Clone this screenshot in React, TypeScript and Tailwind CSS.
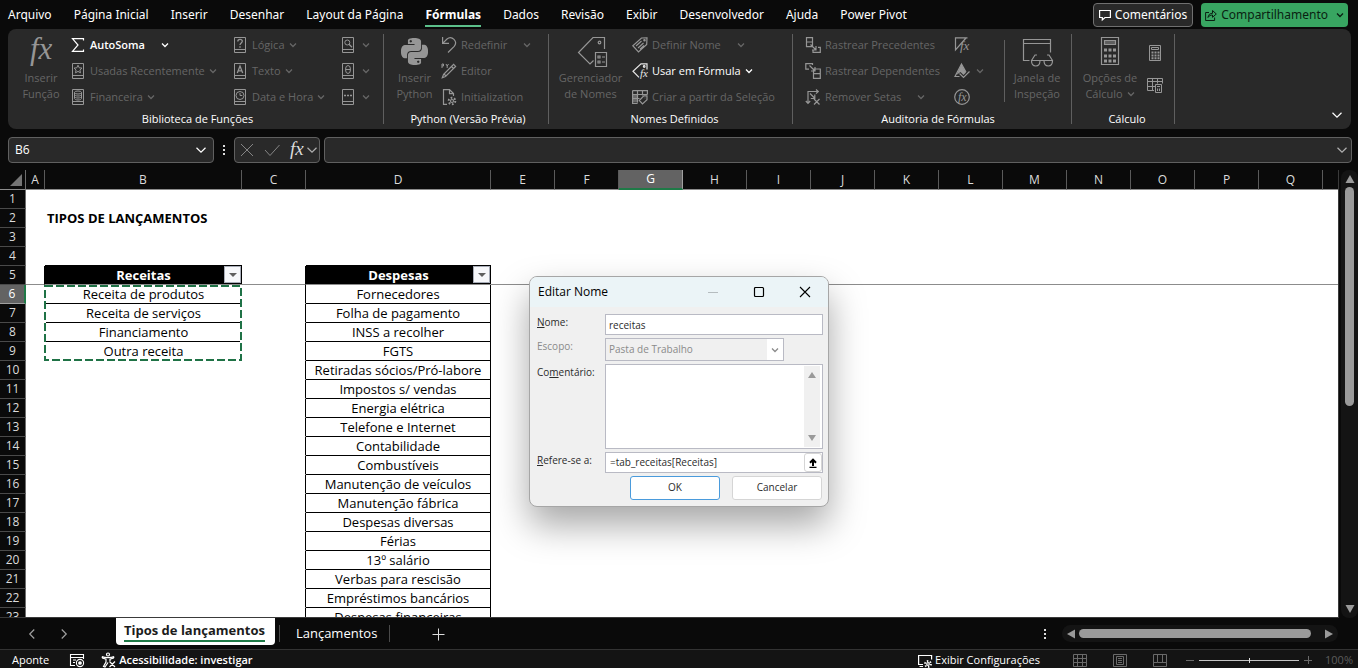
import type { ReactNode } from "react";
import { SiPython } from "react-icons/si";

const MENU = [
  "Arquivo",
  "Página Inicial",
  "Inserir",
  "Desenhar",
  "Layout da Página",
  "Fórmulas",
  "Dados",
  "Revisão",
  "Exibir",
  "Desenvolvedor",
  "Ajuda",
  "Power Pivot",
];

const COLUMNS = [
  { name: "A", width: 19 },
  { name: "B", width: 197 },
  { name: "C", width: 64 },
  { name: "D", width: 185 },
  ..."EFGHIJKLMNOPQ".split("").map((name) => ({ name, width: 64 })),
];

const RECEITAS = ["Receita de produtos", "Receita de serviços", "Financiamento", "Outra receita"];

const DESPESAS = [
  "Fornecedores",
  "Folha de pagamento",
  "INSS a recolher",
  "FGTS",
  "Retiradas sócios/Pró-labore",
  "Impostos s/ vendas",
  "Energia elétrica",
  "Telefone e Internet",
  "Contabilidade",
  "Combustíveis",
  "Manutenção de veículos",
  "Manutenção fábrica",
  "Despesas diversas",
  "Férias",
  "13º salário",
  "Verbas para rescisão",
  "Empréstimos bancários",
  "Despesas financeiras",
];

/* ── Icons ── */
function Icon({
  size = 16,
  className = "",
  width = 1.2,
  children,
}: {
  size?: number;
  className?: string;
  width?: number;
  children: ReactNode;
}) {
  return (
    <svg
      width={size}
      height={size}
      viewBox={`0 0 ${size} ${size}`}
      fill="none"
      stroke="currentColor"
      strokeWidth={width}
      className={`shrink-0 overflow-visible ${className}`}
      aria-hidden="true"
    >
      {children}
    </svg>
  );
}

function Chevron({ size = 8, className = "" }: { size?: number; className?: string }) {
  return (
    <svg
      width={size}
      height={size}
      viewBox="0 0 8 8"
      fill="none"
      stroke="currentColor"
      strokeWidth={size > 8 ? 0.8 : 1.3}
      className={`shrink-0 ${className}`}
      aria-hidden="true"
    >
      <path d="M1 2.500 4 5.500 7 2.500" />
    </svg>
  );
}

function Fx({ x, y, size }: { x: number; y: number; size: number }) {
  return (
    <text
      x={x}
      y={y}
      fontSize={size}
      fontStyle="italic"
      fontFamily="Liberation Serif, serif"
      fill="currentColor"
      stroke="none"
    >
      fx
    </text>
  );
}

// Closed book, with the function category drawn on its cover
function Book({ children }: { children: ReactNode }) {
  return (
    <Icon width={1}>
      <path d="M2.500.5h11v15h-11zM2.500 12.500h11" />
      {children}
    </Icon>
  );
}

const bookStar = (
  <Book>
    <path d="m8 2.200 1.200 2.600 2.800.3-2.100 1.900.6 2.800L8 8.400 5.500 9.800l.6-2.800L4 5.100l2.800-.3z" />
  </Book>
);
const bookCoins = (
  <Book>
    <ellipse cx="8" cy="3.500" rx="3.500" ry="1.500" />
    <path d="M4.500 3.500v6c0 .8 1.500 1.500 3.500 1.500s3.500-.7 3.500-1.500v-6M4.500 5.500C4.500 6.300 6 7 8 7s3.500-.7 3.500-1.500M4.500 7.500C4.500 8.300 6 9 8 9s3.500-.7 3.500-1.500" />
  </Book>
);
const bookQuestion = (
  <Book>
    <path strokeWidth="1.300" d="M5.800 4.500C5.800 3 6.800 2.300 8 2.300s2.300.8 2.300 2C10.300 6 8 6 8 8M8 9.300v1.400" />
  </Book>
);
const bookLetter = (
  <Book>
    <path strokeWidth="1.300" d="M5.300 10 8 3l2.700 7M6.300 7.800h3.400" />
  </Book>
);
const bookClock = (
  <Book>
    <circle cx="8" cy="6.500" r="4" />
    <path d="M8 4v2.500h2.300" />
  </Book>
);
const bookSearch = (
  <Book>
    <circle cx="7.300" cy="5.500" r="2.500" />
    <path strokeWidth="1.300" d="m9 7.300 3 3" />
  </Book>
);
const bookTheta = (
  <Book>
    <ellipse cx="8" cy="6.500" rx="2.500" ry="4" />
    <path d="M5.500 6.500h5" />
  </Book>
);
const bookDots = (
  <Book>
    <path strokeWidth="1.500" d="M4 6.500h2M7 6.500h2M10 6.500h2" />
  </Book>
);
const sigma = (
  <Icon>
    <path d="M13.500 3.500V1.600H2.500L8 8l-5.500 6.400h11v-2" />
  </Icon>
);
const undo = (
  <Icon>
    <path d="M1.600 0v6.400H8M1.900 6.100 6 2c2.200-1.800 5-1.600 7 .4 2 2.100 2 4.800.2 7L7 15.500" />
  </Icon>
);
const pyEditor = (
  <Icon>
    <path strokeWidth="1" d="M1 5V1h1.500v2H1M5 1l1.200 2L7.500 1M6.200 3v2" />
    <path d="M2.500 11.500 12.600 1.400l2 2L4.500 13.500l-3.200 1.200zM10.500 3.500l2 2M3 11l2 2" />
  </Icon>
);
const pyInit = (
  <Icon>
    <path d="M6 15.400H2.500V.6h6l4 4V7M8.500.6v4h4" />
    <circle cx="11" cy="12" r="1.500" />
    <circle cx="11" cy="12" r="3.300" strokeWidth="2" strokeDasharray="1.700 1.750" />
  </Icon>
);
const tagLines = (
  <Icon>
    <path d="M15 .8 9.500 1 .8 8.700 6.500 15l8.200-7.500zM4 9l5.500-5M6 11l5.500-5M8 12.200l4-3.700" />
    <circle cx="12.500" cy="3.300" r=".7" />
  </Icon>
);
const tagFx = (
  <Icon>
    <path d="M15 6.500V.8H9L1 8.200l6 6.200" />
    <circle cx="12.200" cy="3.500" r=".8" />
    <Fx x={8} y={14} size={11} />
  </Icon>
);
const gridTag = (
  <Icon>
    <path d="M.6 1.600h14.800v4M.6 1.600v12.800h5M.6 5.500h14.800M.6 9.500h7M5.500 1.600v12M10.500 1.600v5" />
    <path d="M1 6h4v3H1zM1 10h4v3H1z" fill="currentColor" stroke="none" opacity=".6" />
    <path d="M15 6.800v4L10.500 15 7.300 11.500l4.500-4.700zM13 8.700v.6" />
  </Icon>
);
const precedents = (
  <Icon>
    <path d="M1.500.6h6v9h-6zM1.500 5h6M8 12.500v2.800h7.300v-5H13M5.500 7.500l5 5M11 9v4H7" />
  </Icon>
);
const dependents = (
  <Icon>
    <path d="M7.500 2V.6H.8v5.500H4M8.500 6h6.800v9.400H8.500zM8.500 10.600h6.800M4.500 2.500l5 5M10 4v4H6" />
  </Icon>
);
const removeArrows = (
  <Icon>
    <path d="M3 14V2.500h10M.8 12 3 14.400 5.200 12M11 .5l2.300 2L11 4.600M5 4.500l4.500 4.500M9.800 5.500v4h-4M9 10l5.500 5.500M14.500 10 9 15.500" />
  </Icon>
);
const showFormulas = (
  <Icon>
    <path d="M13.500.8H1.500v12L12 1" />
    <Fx x={6} y={13} size={13} />
  </Icon>
);
const errorCheck = (
  <Icon>
    <path d="M7.500 1 12 9.500 9.500 12 6.500 9 2.500 12z" fill="currentColor" stroke="none" />
    <path d="M5.500 13.500H1L7.500 1l4.500 8M5.500 10.500l4 4L15.500 8.500" />
  </Icon>
);
const evaluate = (
  <Icon>
    <circle cx="8" cy="8" r="7.300" />
    <Fx x={4} y={12} size={12} />
  </Icon>
);

const bigFx = (
  <Icon size={32}>
    <Fx x={5} y={24} size={31} />
  </Icon>
);
const bigTag = (
  <Icon size={32}>
    <path d="M29.500 14V2.500H18L3.500 17.500 15 29l3.500-3.500" />
    <circle cx="24.500" cy="7.500" r="1.300" />
    <path d="M20.500 17.500h11v14h-11zM23 21h2v2h-2zM23 26h2v2h-2zM27 22h3M27 27h3" />
  </Icon>
);
const bigWatch = (
  <Icon size={32}>
    <path d="M8.500 25.500H2.500v-21h27v13M2.500 8.500h27M10.500 25.500 14 20h2M31.500 25.500 28 20h-2M19 25.500h4" />
    <path d="M10.500 25.500H19c0 3.500-1.500 5.500-4.200 5.500s-4.300-2-4.300-5.500zM23 25.500h8.500c0 3.500-1.500 5.500-4.200 5.500S23 29 23 25.500z" />
  </Icon>
);
const bigCalc = (
  <Icon size={32}>
    <path d="M7.500 2.500h17v27h-17z" />
    <path d="M10.500 5.500h11v4h-11z" fill="currentColor" fillOpacity=".5" />
    <path strokeWidth="3" strokeDasharray="3 1.500" d="M10 15h12M10 21h12M10 26h12" />
  </Icon>
);
const calcNow = (
  <Icon width={1}>
    <path d="M2.500.5h11v15h-11zM4.500 2.500h7v2h-7z" />
    <path strokeWidth="2" strokeDasharray="2 1" d="M4.500 7.500h8M4.500 10.500h8M4.500 13.300h8" />
  </Icon>
);
const calcSheet = (
  <Icon width={1}>
    <path d="M7 13.500H.5v-12h15v5M.5 4.500h15M.5 9.500H8M5.500 1.500v12M10.500 1.500v5M8.500 7.500h6v8h-6zM10 9.500h3M10.500 11.500v2.500M12.500 11.500v2.500" />
  </Icon>
);

/* ── Ribbon ── */
function RibbonItem({
  icon,
  label,
  arrow = false,
  spaced = false,
  active = false,
}: {
  icon: ReactNode;
  label: string;
  arrow?: boolean;
  spaced?: boolean;
  active?: boolean;
}) {
  return (
    <button
      type="button"
      disabled={!active}
      className={`flex h-[26px] items-center whitespace-nowrap ${active ? "font-medium text-white" : "text-[#666666]"}`}
    >
      <span className={active ? "text-[#e6e6e6]" : "text-[#969696]"}>{icon}</span>
      <span className="ml-1">{label}</span>
      {arrow && <Chevron className={spaced ? "ml-4" : "ml-1"} />}
    </button>
  );
}

function IconItem({ icon, label, arrow = false }: { icon: ReactNode; label: string; arrow?: boolean }) {
  return (
    <button
      type="button"
      disabled
      aria-label={label}
      className="flex h-[26px] items-center gap-[6px] text-[#666666]"
    >
      <span className="text-[#969696]">{icon}</span>
      {arrow && <Chevron />}
    </button>
  );
}

function BigItem({ icon, lines, arrow = false }: { icon: ReactNode; lines: [string, string]; arrow?: boolean }) {
  return (
    <button
      type="button"
      disabled
      className="flex flex-col items-center pt-[3px] leading-4 whitespace-nowrap text-[#666666]"
    >
      <span className="flex h-8 items-center text-[#969696]">{icon}</span>
      <span className="mt-[3px]">{lines[0]}</span>
      <span className="flex items-center gap-1">
        {lines[1]}
        {arrow && <Chevron />}
      </span>
    </button>
  );
}

function Group({ title, className, children }: { title: string; className: string; children: ReactNode }) {
  return (
    <section className={`flex shrink-0 flex-col pt-[3px] ${className}`}>
      <div className="flex h-[79px]">{children}</div>
      <h2 className="text-center leading-4 font-medium text-white">{title}</h2>
    </section>
  );
}

function Divider() {
  return <div className="my-[5px] w-px shrink-0 bg-[#5f5f5f]" />;
}

function Ribbon() {
  return (
    <div className="mx-2 mr-[7px] flex h-[100px] shrink-0 overflow-hidden rounded-lg bg-[#292929] text-[11px]">
      <Group title="Biblioteca de Funções" className="w-[375px] pl-1">
        <div className="flex w-[58px] justify-center">
          <BigItem icon={bigFx} lines={["Inserir", "Função"]} />
        </div>
        <div className="w-[162px]">
          <button type="button" className="flex h-[26px] items-center font-semibold text-white">
            {sigma}
            <span className="ml-1">AutoSoma</span>
            <Chevron className="ml-4" />
          </button>
          <RibbonItem icon={bookStar} label="Usadas Recentemente" arrow />
          <RibbonItem icon={bookCoins} label="Financeira" arrow />
        </div>
        <div className="w-[108px]">
          <RibbonItem icon={bookQuestion} label="Lógica" arrow />
          <RibbonItem icon={bookLetter} label="Texto" arrow />
          <RibbonItem icon={bookClock} label="Data e Hora" arrow />
        </div>
        <div>
          <IconItem icon={bookSearch} label="Pesquisa e Referência" arrow />
          <IconItem icon={bookTheta} label="Matemática e Trigonometria" arrow />
          <IconItem icon={bookDots} label="Mais Funções" arrow />
        </div>
      </Group>
      <Divider />
      <Group title="Python (Versão Prévia)" className="w-[164px] pl-1">
        <div className="flex w-[53px] justify-center">
          <BigItem icon={<SiPython size={27} />} lines={["Inserir", "Python"]} />
        </div>
        <div>
          <RibbonItem icon={undo} label="Redefinir" arrow spaced />
          <RibbonItem icon={pyEditor} label="Editor" />
          <RibbonItem icon={pyInit} label="Initialization" />
        </div>
      </Group>
      <Divider />
      <Group title="Nomes Definidos" className="w-[243px] pl-2">
        <div className="flex w-[75px] justify-center pr-2">
          <BigItem icon={bigTag} lines={["Gerenciador", "de Nomes"]} />
        </div>
        <div>
          <RibbonItem icon={tagLines} label="Definir Nome" arrow spaced />
          <RibbonItem icon={tagFx} label="Usar em Fórmula" arrow active />
          <RibbonItem icon={gridTag} label="Criar a partir da Seleção" />
        </div>
      </Group>
      <Divider />
      <Group title="Auditoria de Fórmulas" className="w-[278px] pl-3">
        <div className="w-[149px]">
          <RibbonItem icon={precedents} label="Rastrear Precedentes" />
          <RibbonItem icon={dependents} label="Rastrear Dependentes" />
          <RibbonItem icon={removeArrows} label="Remover Setas" arrow spaced />
        </div>
        <div className="w-[50px]">
          <IconItem icon={showFormulas} label="Mostrar Fórmulas" />
          <IconItem icon={errorCheck} label="Verificação de Erros" arrow />
          <IconItem icon={evaluate} label="Avaliar Fórmula" />
        </div>
        <div className="mt-2 h-[62px] w-px bg-[#5f5f5f]" />
        <div className="flex flex-1 justify-center pr-[2px]">
          <BigItem icon={bigWatch} lines={["Janela de", "Inspeção"]} />
        </div>
      </Group>
      <Divider />
      <Group title="Cálculo" className="w-[102px] pl-2">
        <div className="flex w-[60px] justify-center">
          <BigItem icon={bigCalc} lines={["Opções de", "Cálculo"]} arrow />
        </div>
        <div className="flex flex-col gap-4 pt-[13px] pl-[7px] text-[#969696]">
          <button type="button" disabled aria-label="Calcular Agora">
            {calcNow}
          </button>
          <button type="button" disabled aria-label="Calcular Planilha">
            {calcSheet}
          </button>
        </div>
      </Group>
      <Divider />
      <button type="button" aria-label="Opções de exibição da faixa" className="mt-auto mr-2 mb-2 ml-auto text-white">
        <Chevron size={12} />
      </button>
    </div>
  );
}

function MenuBar() {
  return (
    <header className="flex h-[29px] shrink-0 items-center pr-[10px] pl-2 font-['Noto_Sans','Open_Sans',sans-serif] text-white">
      <nav className="flex gap-[22px] pt-[2px] whitespace-nowrap">
        {MENU.map((item) => (
          <a
            key={item}
            href="#"
            className={
              item === "Fórmulas"
                ? "border-b-2 border-[#5cc08a] leading-5 font-bold"
                : "border-b-2 border-transparent leading-5"
            }
          >
            {item}
          </a>
        ))}
      </nav>
      <div className="ml-auto flex shrink-0 gap-2">
        <button
          type="button"
          className="flex h-6 items-center gap-1 rounded border border-[#707070] bg-[#292929] px-[5px] whitespace-nowrap"
        >
          <Icon size={12}>
            <path d="M.6 1.500h10.800v7H6L3.300 11V8.500H.6z" />
          </Icon>
          Comentários
        </button>
        <button
          type="button"
          className="flex h-6 items-center gap-1 rounded bg-[#38a561] px-1 whitespace-nowrap text-[#0a1f12]"
        >
          <Icon size={12} width={1}>
            <path d="M4 3.500H.6v8h9V8.500M3 8.500c.3-3 2-4.200 4.500-4.200V1.500L11.300 5 7.500 8.300V6c-2 0-3.300.6-4.500 2.500z" />
          </Icon>
          Compartilhamento
          <Chevron className="ml-1" />
        </button>
      </div>
    </header>
  );
}

function FormulaBar() {
  return (
    <div className="mx-2 mt-2 mr-[6px] flex h-[26px] shrink-0 items-stretch text-white">
      <div className="flex w-[206px] shrink-0 items-center rounded border border-[#606060] bg-[#292929] px-[6px]">
        <input aria-label="Caixa de nome" defaultValue="B6" className="w-full min-w-0 bg-transparent outline-none" />
        <Chevron size={12} />
      </div>
      <div className="flex w-5 shrink-0 flex-col items-center justify-center gap-[2px]">
        <span className="size-[2px] bg-[#dcdcdc]" />
        <span className="size-[2px] bg-[#dcdcdc]" />
        <span className="size-[2px] bg-[#dcdcdc]" />
      </div>
      <div className="flex w-[86px] shrink-0 items-center justify-between rounded border border-[#606060] bg-[#292929] pr-px pl-1">
        <button type="button" aria-label="Cancelar edição" className="text-[#858585]">
          <Icon size={16} width={1}>
            <path d="m2 2 12 12M14 2 2 14" />
          </Icon>
        </button>
        <button type="button" aria-label="Inserir" className="text-[#858585]">
          <Icon size={16} width={1}>
            <path d="m1 8 5 5.500L15.500 3" />
          </Icon>
        </button>
        <button type="button" aria-label="Inserir função" className="flex items-center text-[#dcdcdc]">
          <Icon size={16}>
            <Fx x={1} y={13} size={19} />
          </Icon>
          <Chevron size={12} className="ml-px text-[#b0b0b0]" />
        </button>
      </div>
      <div className="ml-1 flex min-w-0 flex-1 items-center rounded border border-[#606060] bg-[#292929] pr-[3px] pl-1">
        <input aria-label="Barra de fórmulas" className="w-full min-w-0 bg-transparent outline-none" />
        <Chevron size={12} className="text-[#b0b0b0]" />
      </div>
    </div>
  );
}

/* ── Sheet ── */
function FilterButton({ label }: { label: string }) {
  return (
    <button
      type="button"
      aria-label={`Filtrar ${label}`}
      className="absolute top-0 right-px flex size-[17px] items-center justify-center border border-[#a8adb8] bg-[#f6f7fa]"
    >
      <svg width="8" height="4" viewBox="0 0 8 4" aria-hidden="true">
        <path d="M0 0h8L4 4z" fill="#5f5f5f" />
      </svg>
    </button>
  );
}

function cellClass(row: number, col: string) {
  const freeze = row === 5;
  const tableB = col === "B" && row >= 6 && row <= 9;
  const tableD = col === "D" && row >= 6;
  const headerTop = row === 4 && (col === "B" || col === "D");

  return [
    "relative h-[19px] p-0 border-b whitespace-nowrap leading-[18px]",
    freeze
      ? "border-b-[#8c8c8c]"
      : tableB || tableD || headerTop
        ? "border-b-black"
        : "border-b-transparent",
    freeze && (col === "B" || col === "D") ? "bg-black font-bold text-white" : "text-black",
    tableD ? "border-r border-r-black" : "",
    (col === "C" && row >= 5) || (col === "A" && freeze) ? "border-r border-r-black" : "",
    row === 2 ? "pl-[2px] text-left font-bold text-[13px]" : "text-center text-[13px]",
  ].join(" ");
}

function cellContent(row: number, col: string): ReactNode {
  if (row === 2 && col === "B") return "TIPOS DE LANÇAMENTOS";
  if (row === 5 && (col === "B" || col === "D")) {
    const label = col === "B" ? "Receitas" : "Despesas";
    return (
      <>
        {label}
        <FilterButton label={label} />
      </>
    );
  }
  if (row >= 6 && col === "D") return DESPESAS[row - 6];
  if (row >= 6 && row <= 9 && col === "B") {
    return (
      <>
        {RECEITAS[row - 6]}
        {row === 6 && (
          <svg className="pointer-events-none absolute top-0 -left-px z-10" width="199" height="76" aria-hidden="true">
            <rect x="1" y="1" width="196" height="74" fill="none" stroke="#fff" strokeWidth="2" />
            <rect
              x="1"
              y="1"
              width="196"
              height="74"
              fill="none"
              stroke="#1f7246"
              strokeWidth="2"
              strokeDasharray="8 3"
            />
          </svg>
        )}
      </>
    );
  }
  return null;
}

function Sheet() {
  return (
    <div className="mt-[7px] flex min-h-0 flex-1">
      <div className="min-w-0 flex-1 overflow-hidden border-r border-b border-[#3a3a3a]">
        <table className="w-full table-fixed border-separate border-spacing-0 bg-white">
          <colgroup>
            <col className="w-[26px]" />
            {COLUMNS.map((c) => (
              <col key={c.name} style={{ width: c.width }} />
            ))}
            <col />
          </colgroup>
          <thead>
            <tr className="h-5 bg-[#0a0a0a] text-[#dcdcdc]">
              <th className="border-r border-b border-[#6e6e6e] border-b-[#8c8c8c] p-0">
                <svg width="12" height="12" viewBox="0 0 12 12" className="ml-auto mr-[3px]" aria-hidden="true">
                  <path d="M12 0v12H0z" fill="#757575" />
                </svg>
              </th>
              {COLUMNS.map((c) => (
                <th
                  key={c.name}
                  scope="col"
                  className={
                    c.name === "G"
                      ? "border-r border-b-2 border-r-[#a0a0a0] border-b-[#1f7a47] bg-[#636363] p-0 leading-4 font-normal text-white"
                      : "border-r border-b border-r-[#5a5a5a] border-b-[#8c8c8c] p-0 leading-4 font-normal"
                  }
                >
                  {c.name}
                </th>
              ))}
              <th className="border-b border-[#8c8c8c] p-0" />
            </tr>
          </thead>
          <tbody>
            {Array.from({ length: 23 }, (_, i) => i + 1).map((row) => (
              <tr key={row}>
                <th
                  scope="row"
                  className={
                    row === 6
                      ? "h-[19px] border-r-2 border-b border-r-[#1f7a47] border-b-[#a0a0a0] bg-[#636363] p-0 leading-[18px] font-normal text-white"
                      : "h-[19px] border-r border-b border-r-[#6e6e6e] border-b-[#4a4a4a] bg-[#0a0a0a] p-0 leading-[18px] font-normal text-[#dcdcdc]"
                  }
                >
                  {row}
                </th>
                {COLUMNS.map((c) => (
                  <td key={c.name} className={cellClass(row, c.name)}>
                    {cellContent(row, c.name)}
                  </td>
                ))}
                <td className={cellClass(row, "")} />
              </tr>
            ))}
          </tbody>
        </table>
      </div>
      <div className="ml-[2px] flex w-[17px] shrink-0 flex-col items-center rounded-lg bg-[#141414] py-[5px] text-[#9a9a9a]">
        <svg width="10" height="8" viewBox="0 0 10 8" aria-hidden="true">
          <path d="M5 0 9.500 8H.5z" fill="currentColor" />
        </svg>
        <div className="mt-1 h-1/2 w-[9px] rounded-full bg-[#9a9a9a]" />
        <svg width="10" height="8" viewBox="0 0 10 8" className="mt-auto" aria-hidden="true">
          <path d="M5 8 9.500 0H.5z" fill="currentColor" />
        </svg>
      </div>
    </div>
  );
}

function SheetTabs() {
  return (
    <div className="flex h-[31px] shrink-0 items-stretch text-[13px] text-white">
      <div className="flex w-[116px] items-center gap-5 pl-[26px] text-[#a0a0a0]">
        <button type="button" aria-label="Planilha anterior">
          <Chevron size={12} className="rotate-90" />
        </button>
        <button type="button" aria-label="Próxima planilha">
          <Chevron size={12} className="-rotate-90" />
        </button>
      </div>
      <button
        type="button"
        className="mb-1 flex items-start rounded-b bg-white pt-[3px] pr-[10px] pl-2 font-bold whitespace-nowrap text-[#1c1c1c]"
      >
        <span className="border-b-2 border-[#1f7a47] leading-[19px]">Tipos de lançamentos</span>
      </button>
      <div className="my-[7px] ml-1 flex items-center border-x border-[#4a4a4a] pr-3 pl-4">
        <button type="button" className="whitespace-nowrap">
          Lançamentos
        </button>
      </div>
      <button type="button" aria-label="Nova planilha" className="ml-10 text-[#dcdcdc]">
        <Icon size={16} width={1}>
          <path d="M8.500 2.500v12M2.500 8.500h12" />
        </Icon>
      </button>
      <div className="ml-auto flex items-center">
        <div className="mr-4 flex flex-col gap-[2px]">
          <span className="size-[2px] bg-[#dcdcdc]" />
          <span className="size-[2px] bg-[#dcdcdc]" />
          <span className="size-[2px] bg-[#dcdcdc]" />
        </div>
        <div className="mr-5 flex h-[17px] w-[276px] items-center rounded-full bg-[#141414] px-[5px] text-[#9a9a9a]">
          <svg width="8" height="10" viewBox="0 0 8 10" aria-hidden="true">
            <path d="M0 5 8 .5v9z" fill="currentColor" />
          </svg>
          <div className="ml-1 h-[9px] w-[232px] rounded-full bg-[#9a9a9a]" />
          <svg width="8" height="10" viewBox="0 0 8 10" className="ml-auto" aria-hidden="true">
            <path d="M8 5 0 .5v9z" fill="currentColor" />
          </svg>
        </div>
      </div>
    </div>
  );
}

function StatusBar() {
  return (
    <footer className="flex h-[19px] shrink-0 items-center border-t border-[#333] bg-[#141414] pt-[2px] pr-[5px] pl-3 text-[11px] whitespace-nowrap text-white">
      <span>Aponte</span>
      <button type="button" aria-label="Gravar macro" className="ml-5">
        <Icon width={1.1}>
          <path d="M6 13.500H1.500v-11h13V7M1.500 5.500h13M4 8h3M4 10.500h2" />
          <circle cx="11" cy="11" r="3.600" />
          <circle cx="11" cy="11" r="1.300" fill="currentColor" />
        </Icon>
      </button>
      <button type="button" className="ml-4 flex items-center gap-[2px] font-semibold">
        <Icon>
          <circle cx="7" cy="2.500" r="1.500" />
          <path d="M1 4.500C4 6 10 6 13 4.500M1 4.500l.5 1.500L5 7.200V10l-2.500 4.500 1.500.6L7 10.500M13 4.500l-.5 1.500L9 7.200V9M8.500 9.500l5.500 5.500M14 9.500 8.500 15" />
        </Icon>
        Acessibilidade: investigar
      </button>
      <div className="ml-auto flex items-center">
        <button type="button" className="flex items-center gap-[2px] font-medium">
          <Icon size={15}>
            <path d="M5 11.500H.6v-9h13v4M1.500 13.500H5" />
            <circle cx="10" cy="11" r="1.300" />
            <circle cx="10" cy="11" r="3" strokeWidth="1.800" strokeDasharray="1.500 1.640" />
          </Icon>
          Exibir Configurações
        </button>
        <div className="ml-8 flex gap-6 text-[#6a6a6a]">
          <button type="button" aria-label="Normal">
            <Icon width={1}>
              <path d="M1.500 2.500h13v12h-13zM1.500 6.500h13M1.500 10.500h13M5.500 2.500v12M10.500 2.500v12" />
            </Icon>
          </button>
          <button type="button" aria-label="Layout da página">
            <Icon width={1}>
              <path d="M1.500 2.500h13v12h-13zM4.500 4.500h7v8h-7zM6 6.500h4M6 8.500h4M6 10.500h4" />
            </Icon>
          </button>
          <button type="button" aria-label="Quebra de página">
            <Icon width={1}>
              <path d="M1.500 2.500h13v12h-13zM5.500 2.500v8h9M10.500 2.500v8M1.500 10.500h4" />
            </Icon>
          </button>
        </div>
        <button type="button" aria-label="Reduzir" className="ml-[17px] text-[#6a6a6a]">
          <Icon size={10} width={1}>
            <path d="M1 5.500h8" />
          </Icon>
        </button>
        <div className="mx-1 flex h-[5px] w-[100px] items-center bg-linear-to-r from-[#c4c4c4] to-[#c4c4c4] bg-[length:100%_1px] bg-center bg-no-repeat">
          <span className="mx-auto h-[5px] w-px bg-[#e0e0e0]" />
        </div>
        <button type="button" aria-label="Ampliar" className="text-[#6a6a6a]">
          <Icon size={10} width={1}>
            <path d="M1 5.500h8M5.500 1v8" />
          </Icon>
        </button>
        <span className="ml-3 text-[#5c5c5c]">100%</span>
      </div>
    </footer>
  );
}

/* ── Edit name dialog ── */
function EditNameDialog() {
  return (
    <div
      role="dialog"
      aria-labelledby="dialog-title"
      className="absolute top-[276px] left-[529px] z-20 w-[300px] overflow-hidden rounded-lg border border-[#a6a6a6] bg-[#f0f0f0] text-[10px] text-[#2b2b2b] shadow-[0_18px_36px_rgba(0,0,0,0.35)]"
    >
      <div className="flex h-[30px] items-center bg-[#ebf4f7] pl-2 text-black">
        <h1 id="dialog-title" className="text-xs">
          Editar Nome
        </h1>
        <div className="ml-auto flex items-center gap-[34px] pr-[17px]">
          <button type="button" aria-label="Minimizar" disabled className="text-[#b5bcbf]">
            <Icon size={12} width={1}>
              <path d="M1 6.500h10" />
            </Icon>
          </button>
          <button type="button" aria-label="Maximizar">
            <Icon size={12}>
              <rect x="1.500" y="1.500" width="9" height="9" rx="1" />
            </Icon>
          </button>
          <button type="button" aria-label="Fechar">
            <Icon size={12} width={1.1}>
              <path d="m1 1 10 10M11 1 1 11" />
            </Icon>
          </button>
        </div>
      </div>
      <form className="grid grid-cols-[68px_1fr] gap-y-[3px] pt-[7px] pr-[5px] pb-[6px] pl-[7px]">
        <label htmlFor="nome" className="leading-4">
          <u>N</u>ome:
        </label>
        <input
          id="nome"
          defaultValue="receitas"
          className="h-[21px] w-full border border-[#b9bac4] bg-white px-[3px] outline-none"
        />
        <label htmlFor="escopo" className="leading-4 text-[#8a8a8a]">
          Escopo:
        </label>
        <div className="relative w-[179px]">
          <select
            id="escopo"
            disabled
            className="block h-[23px] w-full appearance-none border border-[#b9bac4] bg-[#f0f0f0] px-[3px] text-[#8a8a8a] opacity-100"
          >
            <option>Pasta de Trabalho</option>
          </select>
          <span className="pointer-events-none absolute inset-y-px right-px flex w-4 items-center justify-center bg-white text-[#8a8a8a]">
            <Chevron />
          </span>
        </div>
        <label htmlFor="comentario" className="leading-4">
          Co<u>m</u>entário:
        </label>
        <div className="flex h-[85px] border border-[#b9bac4] bg-white">
          <textarea id="comentario" className="min-w-0 flex-1 resize-none p-1 outline-none" />
          <div className="my-px mr-[2px] flex w-4 flex-col items-center justify-between bg-[#f0f0f0] py-[6px]">
            <svg width="8" height="6" viewBox="0 0 8 6" aria-hidden="true">
              <path d="M4 0 8 6H0z" fill="#9a9a9a" />
            </svg>
            <svg width="8" height="6" viewBox="0 0 8 6" aria-hidden="true">
              <path d="M4 6 8 0H0z" fill="#9a9a9a" />
            </svg>
          </div>
        </div>
        <label htmlFor="refere" className="leading-4">
          <u>R</u>efere-se a:
        </label>
        <div className="flex h-[21px] border border-[#b9bac4] bg-white">
          <input id="refere" defaultValue="=tab_receitas[Receitas]" className="min-w-0 flex-1 px-1 outline-none" />
          <button
            type="button"
            aria-label="Recolher caixa de diálogo"
            className="flex w-[18px] items-center justify-center rounded-[3px] border border-[#d5d5d5] text-black"
          >
            <Icon size={10} width={2}>
              <path d="M5 8V2M2 4.700 5 1.700l3 3" />
              <path d="M1.500 9.300h7" strokeWidth="1.300" />
            </Icon>
          </button>
        </div>
        <div className="col-span-2 flex justify-end gap-3 pr-px">
          <button type="submit" className="h-6 w-[90px] rounded-[3px] border border-[#4a9bdc] bg-white">
            OK
          </button>
          <button type="button" className="h-6 w-[90px] rounded-[3px] border border-[#d5d5d5] bg-white">
            Cancelar
          </button>
        </div>
      </form>
    </div>
  );
}

export default function App() {
  return (
    <div className="relative flex h-screen flex-col overflow-hidden bg-[#0a0a0a] font-['Open_Sans','Noto_Sans',sans-serif] text-xs">
      <MenuBar />
      <Ribbon />
      <FormulaBar />
      <Sheet />
      <SheetTabs />
      <StatusBar />
      <EditNameDialog />
    </div>
  );
}
